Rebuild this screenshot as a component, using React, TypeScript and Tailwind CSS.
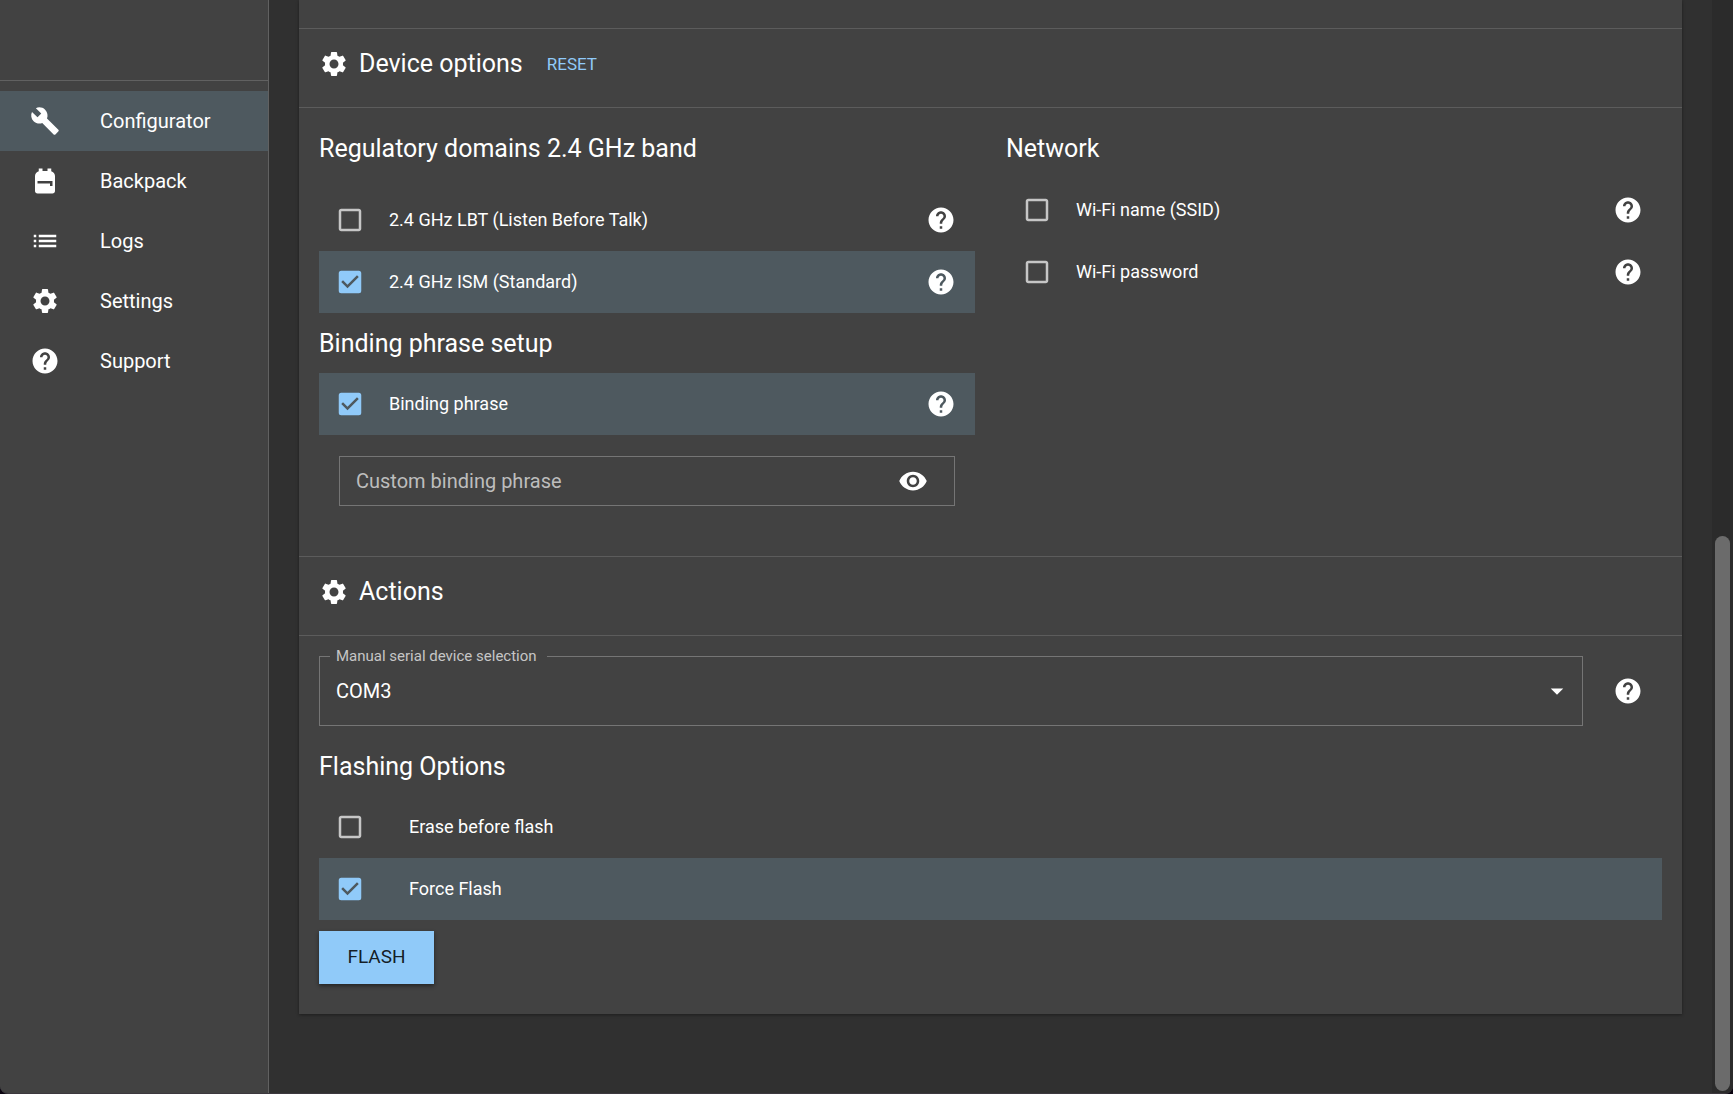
import { useState } from "react";
import type { ReactNode } from "react";
import type { IconType } from "react-icons";
import {
  MdArrowDropDown,
  MdBackpack,
  MdBuild,
  MdCheckBox,
  MdCheckBoxOutlineBlank,
  MdHelp,
  MdList,
  MdSettings,
  MdVisibility,
} from "react-icons/md";
import clsx from "clsx";

const navItems: { label: string; icon: IconType }[] = [
  { label: "Configurator", icon: MdBuild },
  { label: "Backpack", icon: MdBackpack },
  { label: "Logs", icon: MdList },
  { label: "Settings", icon: MdSettings },
  { label: "Support", icon: MdHelp },
];

function Sidebar() {
  return (
    <aside className="w-[269px] shrink-0 border-r border-[#616161] bg-[#424242]">
      <div className="h-20" />
      <nav className="border-t border-[#616161] py-2.5">
        {navItems.map(({ label, icon: Icon }, i) => (
          <a
            key={label}
            href={`#${label.toLowerCase()}`}
            aria-current={i === 0 ? "page" : undefined}
            className={clsx("flex h-15 items-center gap-10 pl-[30px] text-xl", i === 0 && "bg-[#4e595f]")}
          >
            <Icon size={30} />
            {label}
          </a>
        ))}
      </nav>
    </aside>
  );
}

function HelpButton({ topic }: { topic: string }) {
  return (
    <button type="button" aria-label={`Help: ${topic}`} className="shrink-0">
      <MdHelp size={30} />
    </button>
  );
}

type OptionRowProps = {
  label: string;
  defaultChecked?: boolean;
  help?: boolean;
  wide?: boolean;
};

function OptionRow({ label, defaultChecked = false, help = true, wide = false }: OptionRowProps) {
  const [checked, setChecked] = useState(defaultChecked);
  return (
    <div className={clsx("flex h-[62px] items-center pr-[19px] pl-4", checked && "bg-[#4e595f]")}>
      <label className={clsx("flex flex-1 items-center text-lg", wide ? "gap-11" : "gap-6")}>
        <span className="grid size-[30px]">
          <input
            type="checkbox"
            checked={checked}
            onChange={(e) => setChecked(e.target.checked)}
            className="col-start-1 row-start-1 appearance-none"
          />
          <span className="pointer-events-none col-start-1 row-start-1">
            {checked ? (
              <MdCheckBox size={30} className="text-[#90caf9]" />
            ) : (
              <MdCheckBoxOutlineBlank size={30} className="text-[#c6c6c6]" />
            )}
          </span>
        </span>
        {label}
      </label>
      {help && <HelpButton topic={label} />}
    </div>
  );
}

function SectionHeader({ title, children }: { title: string; children?: ReactNode }) {
  return (
    <header className="flex h-20 items-center border-y border-[#5c5c5c] px-5 pb-2">
      <MdSettings size={30} />
      <h2 className="ml-2.5 text-[25px] leading-8">{title}</h2>
      {children}
    </header>
  );
}

function DeviceOptions() {
  return (
    <section>
      <SectionHeader title="Device options">
        <button type="button" className="ml-6 pt-0.5 text-[17px] text-[#90caf9]">
          RESET
        </button>
      </SectionHeader>
      <div className="grid grid-cols-2 gap-[31px] px-5 pt-[25px] pb-[50px]">
        <div>
          <h3 className="text-[25px] leading-8">Regulatory domains 2.4 GHz band</h3>
          <div className="pt-6">
            <OptionRow label="2.4 GHz LBT (Listen Before Talk)" />
            <OptionRow label="2.4 GHz ISM (Standard)" defaultChecked />
          </div>
          <h3 className="pt-[15px] pb-[13px] text-[25px] leading-8">Binding phrase setup</h3>
          <OptionRow label="Binding phrase" defaultChecked />
          <div className="mx-5 mt-[21px] flex h-[50px] items-center border border-[#757575] pr-[26px] pl-4 text-xl">
            <input
              type="text"
              aria-label="Custom binding phrase"
              placeholder="Custom binding phrase"
              className="min-w-0 flex-1 bg-transparent outline-none placeholder:text-[#bdbdbd]"
            />
            <button type="button" aria-label="Toggle phrase visibility">
              <MdVisibility size={30} />
            </button>
          </div>
        </div>
        <div>
          <h3 className="text-[25px] leading-8">Network</h3>
          <div className="pt-[14px]">
            <OptionRow label="Wi-Fi name (SSID)" />
            <OptionRow label="Wi-Fi password" />
          </div>
        </div>
      </div>
    </section>
  );
}

function Actions() {
  return (
    <section>
      <SectionHeader title="Actions" />
      <div className="px-5 pt-2.5 pb-[30px]">
        <div className="flex items-center">
          <fieldset className="h-20 min-w-0 flex-1 border border-[#757575]">
            <legend className="ml-2.5 pr-2.5 pl-1.5 text-[15px] leading-5 text-[#c6c6c6]">
              <label htmlFor="serial-device">Manual serial device selection</label>
            </legend>
            <div className="grid h-full items-center pb-5">
              <select
                id="serial-device"
                className="col-start-1 row-start-1 h-[50px] appearance-none bg-transparent px-4 text-xl outline-none"
              >
                <option>COM3</option>
              </select>
              <MdArrowDropDown
                size={30}
                className="pointer-events-none col-start-1 row-start-1 mr-2.5 justify-self-end"
              />
            </div>
          </fieldset>
          <div className="flex pt-2.5 pr-[19px] pl-[30px]">
            <HelpButton topic="Manual serial device selection" />
          </div>
        </div>
        <h3 className="pt-[25px] pb-[13px] text-[25px] leading-8">Flashing Options</h3>
        <OptionRow label="Erase before flash" help={false} wide />
        <OptionRow label="Force Flash" help={false} wide defaultChecked />
        <button
          type="button"
          className="mt-[11px] h-[53px] min-w-[115px] bg-[#90caf9] px-7 text-[19px] text-black/87 shadow-[0_2px_4px_rgba(0,0,0,0.45)]"
        >
          FLASH
        </button>
      </div>
    </section>
  );
}

export default function App() {
  return (
    <div className="h-screen bg-[#0a0410] font-['Roboto',sans-serif] text-white">
      <div className="flex h-full overflow-hidden rounded-b-lg border-b border-[#3c383e] bg-[#303030]">
        <Sidebar />
        <main className="min-w-0 flex-1 px-[30px]">
          <div className="bg-[#424242] pt-7 shadow-[0_1px_3px_rgba(0,0,0,0.4)]">
            <DeviceOptions />
            <Actions />
          </div>
        </main>
        <div className="flex w-[21px] shrink-0 flex-col justify-end bg-[#2b2b2b] pt-0.5 pr-[3px] pb-0.5 pl-[3px]">
          <div className="h-[51%] rounded-full bg-[#6b6b6b]" />
        </div>
      </div>
    </div>
  );
}
